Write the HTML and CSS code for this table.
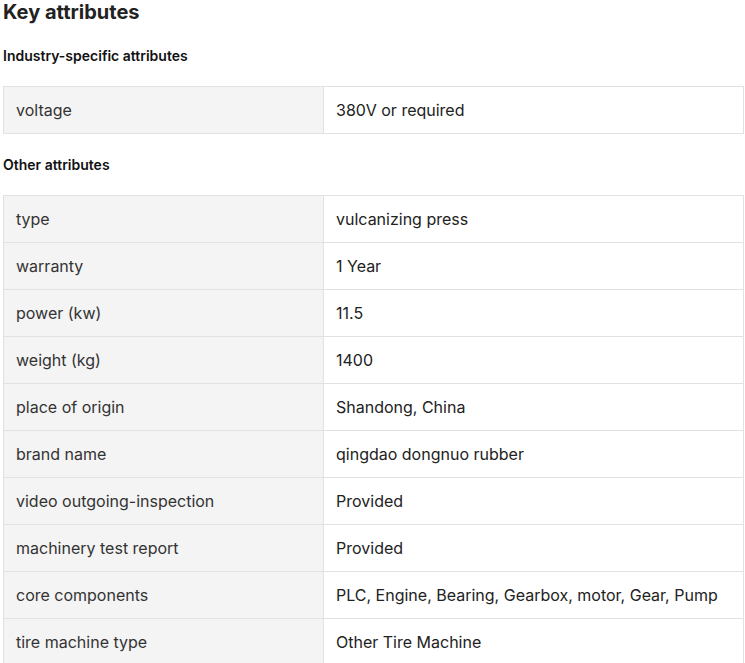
FILE: index.html
```html
<!DOCTYPE html>
<html>
<head>
<meta charset="utf-8">
<link rel="stylesheet" href="styles.css">
</head>
<body>
<div class="page">
  <h2 class="title">Key attributes</h2>
  <h3 class="sub">Industry-specific attributes</h3>
  <table class="attrs">
    <tr><td class="k">voltage</td><td class="v">380V or required</td></tr>
  </table>
  <h3 class="sub sub-next">Other attributes</h3>
  <table class="attrs">
    <tr><td class="k">type</td><td class="v">vulcanizing press</td></tr>
    <tr><td class="k">warranty</td><td class="v">1 Year</td></tr>
    <tr><td class="k">power (kw)</td><td class="v">11.5</td></tr>
    <tr><td class="k">weight (kg)</td><td class="v">1400</td></tr>
    <tr><td class="k">place of origin</td><td class="v">Shandong, China</td></tr>
    <tr><td class="k">brand name</td><td class="v">qingdao dongnuo rubber</td></tr>
    <tr><td class="k">video outgoing-inspection</td><td class="v">Provided</td></tr>
    <tr><td class="k">machinery test report</td><td class="v">Provided</td></tr>
    <tr><td class="k">core components</td><td class="v">PLC, Engine, Bearing, Gearbox, motor, Gear, Pump</td></tr>
    <tr><td class="k">tire machine type</td><td class="v">Other Tire Machine</td></tr>
  </table>
</div>
</body>
</html>
```
FILE: styles.css
```css
html, body { margin: 0; padding: 0; background: #fff; }
body { font-family: Inter, "Noto Sans", sans-serif; color: #222; }
.page { padding: 0 1px 0 3px; }
.title { margin: 0; font-size: 20px; line-height: 24px; font-weight: 700; color: #222; }
.sub { margin: 22px 0 20px; font-size: 14px; line-height: 20px; font-weight: 600; color: #111; }
.sub-next { margin-top: 21px; }
.attrs { width: 100%; border-collapse: collapse; font-size: 16px; }
.attrs td { border: 1px solid #e2e2e2; padding: 12px; line-height: 22px; vertical-align: middle; }
.attrs .k { width: 295px; background: #f4f4f4; color: #333; }
.attrs .v { background: #fff; color: #222; }
```
